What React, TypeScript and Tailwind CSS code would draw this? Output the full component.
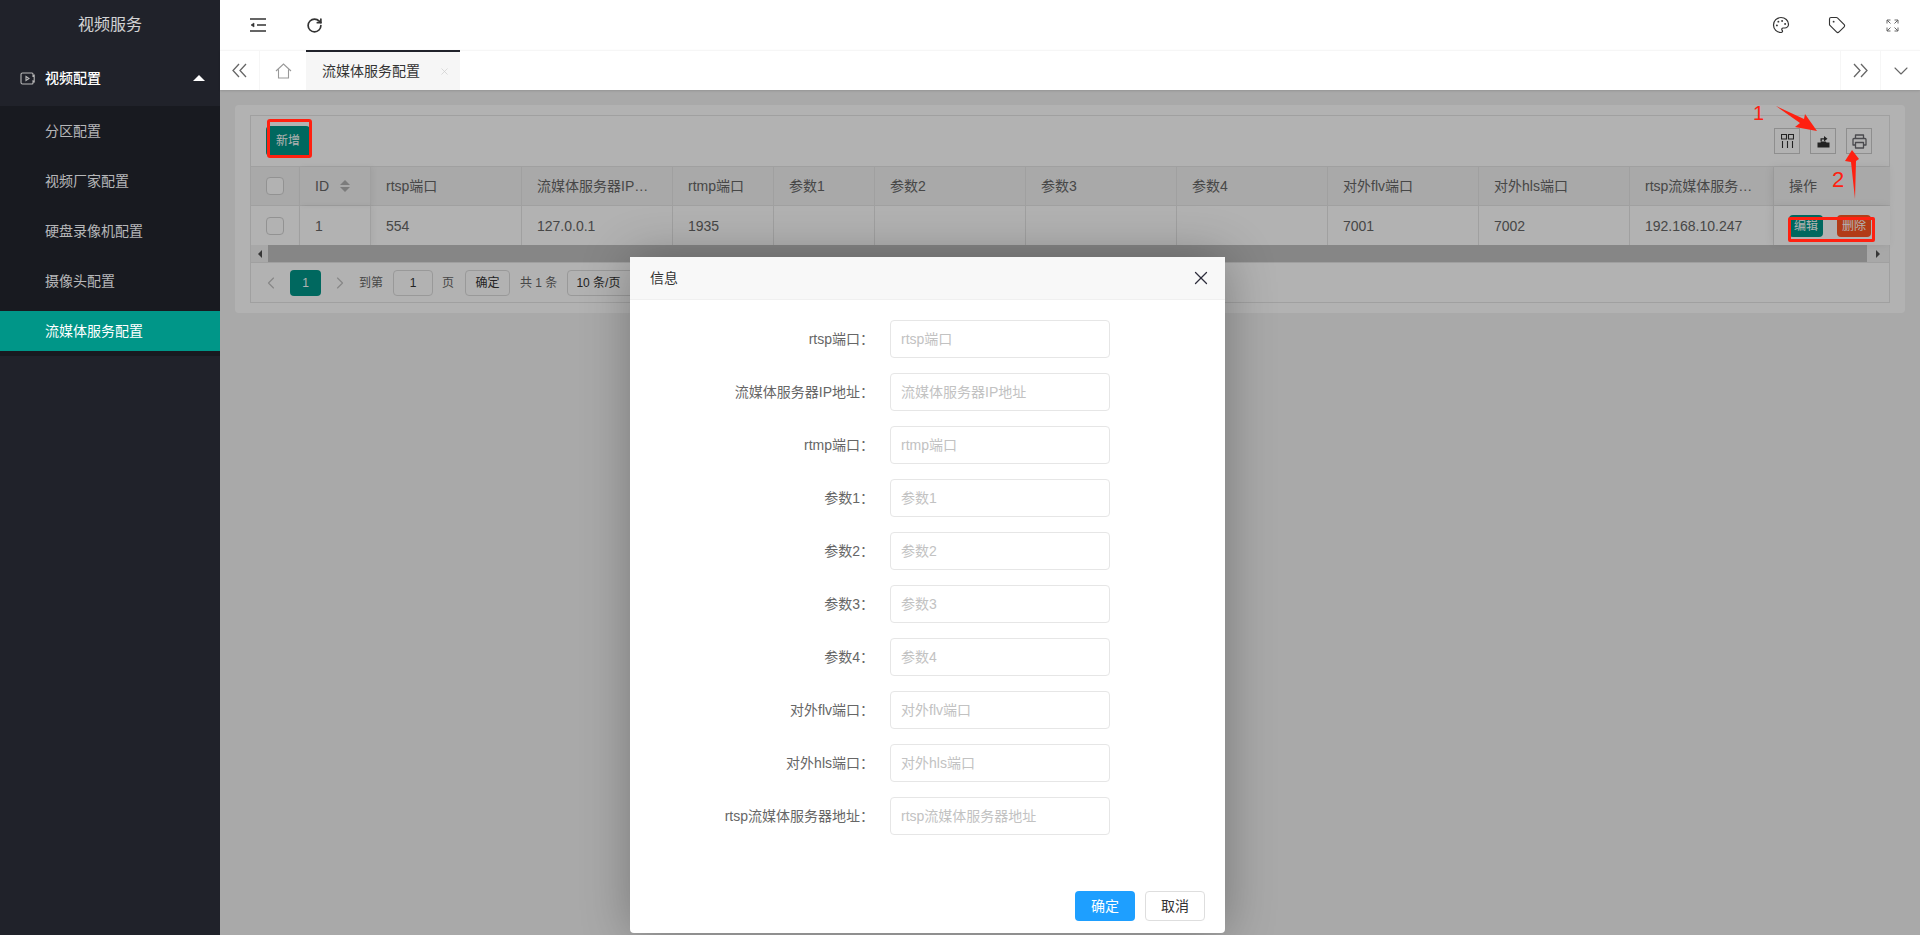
import { ChevronDown, ChevronLeft, ChevronRight, Palette, RotateCw, Tag, X } from "lucide-react";

const gridCols =
  "grid grid-cols-[49px_71px_151px_151px_101px_101px_151px_151px_151px_151px_151px_144px_116px]";

const menuItems = ["分区配置", "视频厂家配置", "硬盘录像机配置", "摄像头配置", "流媒体服务配置"];

const columns = [
  "rtsp端口",
  "流媒体服务器IP地址",
  "rtmp端口",
  "参数1",
  "参数2",
  "参数3",
  "参数4",
  "对外flv端口",
  "对外hls端口",
  "rtsp流媒体服务器地址",
];

const rowValues = ["554", "127.0.0.1", "1935", "", "", "", "", "7001", "7002", "192.168.10.247"];

const fields = [
  "rtsp端口",
  "流媒体服务器IP地址",
  "rtmp端口",
  "参数1",
  "参数2",
  "参数3",
  "参数4",
  "对外flv端口",
  "对外hls端口",
  "rtsp流媒体服务器地址",
];

function Sidebar() {
  return (
    <aside className="flex h-full w-[220px] shrink-0 flex-col bg-[#20222a]">
      <div className="flex h-[50px] items-center justify-center text-base text-white/80">视频服务</div>
      <div className="flex h-[56px] items-center pl-5 pr-[15px] text-sm text-white">
        <svg width="15" height="13" viewBox="0 0 15 13" fill="none" stroke="#b8b8b8" strokeWidth="1.1">
          <path d="M2.5 1h9.5a1 1 0 0 1 1 1v2l1.200-.8v6.600L13 9v2a1 1 0 0 1-1 1H2.500a1.500 1.500 0 0 1-1.500-1.500v-8A1.500 1.500 0 0 1 2.500 1z" />
          <path d="M6 4.500l3 2-3 2z" />
        </svg>
        <span className="ml-[10px] flex-1 font-medium">视频配置</span>
        <span className="h-0 w-0 border-x-[6px] border-b-[6px] border-x-transparent border-b-white" />
      </div>
      <div className="flex flex-col gap-[10px] bg-[#181a20] py-[5px]">
        {menuItems.map((item, i) => (
          <div
            key={item}
            className={`flex h-10 items-center pl-[45px] text-sm ${
              i === 4 ? "bg-[#009688] text-white" : "text-white/70"
            }`}
          >
            {item}
          </div>
        ))}
      </div>
    </aside>
  );
}

function TopBar() {
  return (
    <div className="flex h-[50px] shrink-0 items-center bg-white text-[#333]">
      <div className="flex w-[75px] justify-center pl-[1px]">
        <svg width="16" height="14" viewBox="0 0 16 14" fill="none" stroke="#333" strokeWidth="1.5">
          <path d="M0 1h16M7 7h9M0 13h16" />
          <path d="M4 5v4L1 7z" fill="#333" strokeWidth="0.6" />
        </svg>
      </div>
      <RotateCw size={17} strokeWidth={2.4} className="ml-[11px]" />
      <div className="ml-auto flex items-center pr-[21px] text-[#333]">
        <Palette size={18} strokeWidth={1.6} />
        <Tag size={18} strokeWidth={1.5} className="ml-[38px]" />
        <svg width="13" height="13" viewBox="0 0 13 13" fill="none" stroke="#666" strokeWidth="1" className="ml-10">
          <path d="M1 4.500V1h3.500M1 1l3.500 3.500M8.500 1H12v3.500M12 1L8.500 4.500M1 8.500V12h3.500M1 12l3.500-3.500M12 8.500V12H8.500M12 12L8.500 8.500" />
        </svg>
      </div>
    </div>
  );
}

function TabBar() {
  return (
    <div className="relative z-10 flex h-10 shrink-0 border-t border-[#f6f6f6] bg-white shadow-[0_1px_2px_rgba(0,0,0,0.12)]">
      <div className="flex w-10 items-center justify-center border-r border-[#f6f6f6]">
        <svg width="15" height="15" viewBox="0 0 15 15" fill="none" stroke="#666" strokeWidth="1.3">
          <path d="M7 1L1 7.500 7 14M14 1L8 7.500 14 14" />
        </svg>
      </div>
      <div className="flex w-[46px] items-center justify-center">
        <svg width="17" height="16" viewBox="0 0 17 16" fill="none" stroke="#999" strokeWidth="1.1">
          <path d="M1 8l7.500-7L16 8M3.500 6.500V15h10V6.500" />
        </svg>
      </div>
      <div className="-mt-px flex w-[154px] items-center border-t-2 border-[#20222a] bg-[#f6f6f6] pl-[16px] text-sm text-[#333]">
        <span>流媒体服务配置</span>
        <X size={11} strokeWidth={1.5} className="ml-[19px] text-[#ccc]" />
      </div>
      <div className="ml-auto flex w-10 items-center justify-center border-l border-[#f6f6f6]">
        <svg width="15" height="15" viewBox="0 0 15 15" fill="none" stroke="#666" strokeWidth="1.3">
          <path d="M1 1l6 6.500L1 14M8 1l6 6.500L8 14" />
        </svg>
      </div>
      <div className="flex w-10 items-center justify-center border-l border-[#f6f6f6]">
        <ChevronDown size={24} strokeWidth={1.1} className="text-[#666]" />
      </div>
    </div>
  );
}

function Checkbox() {
  return <span className="block h-[18px] w-[18px] rounded-sm border border-[#d2d2d2] bg-white" />;
}

function ToolIcon({ children }: { children: React.ReactNode }) {
  return (
    <span className="flex h-[26px] w-[26px] items-center justify-center border border-[#ccc] text-[#333]">
      {children}
    </span>
  );
}

function DataTable() {
  return (
    <div className="border border-[#e6e6e6] text-sm text-[#666]">
      <div className="flex h-[51px] items-center justify-between border-b border-[#e6e6e6] pl-[15px] pr-[17px]">
        <button className="h-[30px] w-[44px] rounded-sm bg-[#009688] text-xs text-white">新增</button>
        <div className="flex gap-[10px]">
          <ToolIcon>
            <svg width="13" height="14" viewBox="0 0 13 14" fill="none" stroke="#333" strokeWidth="1.100">
              <path d="M.5.5h5v4.500h-5zM7.500.5h5v4.500h-5zM1.500 7v7M6.500 7v7M11.500 7v7" />
            </svg>
          </ToolIcon>
          <ToolIcon>
            <svg width="13" height="14" viewBox="0 0 13 14">
              <path d="M0.500 8.500h3l.8-1h4.400l.8 1h3V13.500H.5z" fill="#333" />
              <path d="M3.500 7.500V4.200h3.500V2l3.500 2.800-3.500 2.700V5.400H4.800v2.100z" fill="#333" />
            </svg>
          </ToolIcon>
          <ToolIcon>
            <svg width="15" height="15" viewBox="0 0 15 15" fill="none" stroke="#6b6b70" strokeWidth="1.300" strokeLinejoin="round">
              <path d="M3.500 4.500V1h8v3.500M3.500 11H1V5.500a1 1 0 0 1 1-1h11a1 1 0 0 1 1 1V11h-2.500" />
              <path d="M3.500 8.500h8V14h-8z" />
            </svg>
          </ToolIcon>
        </div>
      </div>

      <div className={`${gridCols} h-[39px] border-b border-[#e6e6e6] bg-[#f2f2f2]`}>
        <div className="flex items-center justify-center border-r border-[#e6e6e6]">
          <Checkbox />
        </div>
        <div className="flex items-center border-r border-[#e6e6e6] pl-[15px] shadow-[2px_0_6px_rgba(0,0,0,0.05)]">
          ID
          <span className="ml-[11px] flex flex-col gap-[2px]">
            <span className="h-0 w-0 border-x-[5px] border-b-[5px] border-x-transparent border-b-[#b2b2b2]" />
            <span className="h-0 w-0 border-x-[5px] border-t-[5px] border-x-transparent border-t-[#b2b2b2]" />
          </span>
        </div>
        {columns.map((c) => (
          <div key={c} className="flex items-center border-r border-[#e6e6e6] px-[15px]">
            <span className="truncate">{c}</span>
          </div>
        ))}
        <div className="relative flex items-center bg-[#f2f2f2] pl-[15px] shadow-[-2px_0_8px_rgba(0,0,0,0.08)]">
          操作
        </div>
      </div>

      <div className={`${gridCols} h-[39px]`}>
        <div className="flex items-center justify-center border-r border-[#e6e6e6]">
          <Checkbox />
        </div>
        <div className="flex items-center border-r border-[#e6e6e6] pl-[15px] shadow-[2px_0_6px_rgba(0,0,0,0.05)]">
          1
        </div>
        {rowValues.map((v, i) => (
          <div key={i} className="flex items-center border-r border-[#e6e6e6] px-[15px]">
            {v}
          </div>
        ))}
        <div className="relative flex items-center gap-[14px] bg-white pl-[15px] shadow-[-2px_0_8px_rgba(0,0,0,0.08)]">
          <button className="h-[22px] w-[34px] rounded-sm bg-[#009688] text-xs text-white">编辑</button>
          <button className="h-[22px] w-[34px] rounded-sm bg-[#ff5722] text-xs text-white">删除</button>
        </div>
      </div>

      <div className="flex h-[17px] items-center bg-[#f1f1f1]">
        <span className="flex w-[17px] justify-center">
          <span className="h-0 w-0 border-y-[4px] border-r-[4px] border-y-transparent border-r-[#505050]" />
        </span>
        <span className="h-full flex-1 bg-[#c1c1c1]" />
        <span className="flex w-[22px] justify-center">
          <span className="h-0 w-0 border-y-[4px] border-l-[4px] border-y-transparent border-l-[#505050]" />
        </span>
      </div>

      <div className="flex h-[40px] items-center border-t border-[#e6e6e6] pl-[10px] text-xs">
        <ChevronLeft size={20} strokeWidth={1.4} className="text-[#c2c2c2]" />
        <span className="ml-[9px] flex h-[26px] w-[31px] items-center justify-center rounded-sm bg-[#009688] text-white">
          1
        </span>
        <ChevronRight size={20} strokeWidth={1.4} className="ml-[9px] text-[#c2c2c2]" />
        <span className="ml-[9px]">到第</span>
        <span className="ml-[10px] flex h-[26px] w-[40px] items-center justify-center rounded-sm border border-[#dcdcdc] text-[#333]">
          1
        </span>
        <span className="ml-[9px]">页</span>
        <span className="ml-[11px] flex h-[26px] w-[45px] items-center justify-center rounded-sm border border-[#dcdcdc] text-[#333]">
          确定
        </span>
        <span className="ml-[10px]">共 1 条</span>
        <span className="ml-[10px] flex h-[26px] w-[100px] items-center rounded-sm border border-[#dcdcdc] pl-[8px] text-[#333]">
          10 条/页
        </span>
      </div>
    </div>
  );
}

function InfoDialog() {
  return (
    <div className="absolute left-[410px] top-[167px] flex h-[676px] w-[595px] flex-col rounded-sm bg-white shadow-[1px_1px_50px_rgba(0,0,0,0.3)]">
      <div className="flex h-[43px] shrink-0 items-center justify-between border-b border-[#f0f0f0] bg-[#f8f8f8] pl-5 pr-[13px] text-sm text-[#333]">
        信息
        <X size={22} strokeWidth={1.4} className="text-[#2e2d3c]" />
      </div>
      <div className="flex flex-1 flex-col gap-[15px] pt-5 text-sm">
        {fields.map((f) => (
          <div key={f} className="flex items-center">
            <label className="w-[244px] text-right text-[#666]">{f}：</label>
            <input
              placeholder={f}
              className="ml-4 h-[38px] w-[220px] rounded-sm border border-[#e6e6e6] px-[10px] text-sm outline-none placeholder:text-[#c2c2c2]"
            />
          </div>
        ))}
      </div>
      <div className="flex justify-end gap-[10px] pb-[12px] pr-5 text-sm">
        <button className="h-[30px] w-[60px] rounded-sm bg-[#1e9fff] text-white">确定</button>
        <button className="h-[30px] w-[60px] rounded-sm border border-[#dedede] bg-white text-[#333]">取消</button>
      </div>
    </div>
  );
}

// red marks someone drew on the screenshot
function Annotations() {
  return (
    <>
      <span className="absolute left-[1533px] top-[11px] text-[20px] leading-6 text-[#ff2010]">1</span>
      <span className="absolute left-[1612px] top-[78px] text-[22px] leading-6 text-[#ff2010]">2</span>
      <svg className="absolute left-[1520px] top-0" width="160" height="110" viewBox="0 0 160 110" fill="#ff2010">
        <polygon points="36,16 64,29 65,24 77,41 55,37 60,33" />
        <polygon points="115,109 111,72 105,71 112,60 119,69 116,71" />
      </svg>
      <span className="absolute left-[47px] top-[29px] h-[39px] w-[45px] rounded-[3px] border-[3px] border-[#ff2010]" />
      <span className="absolute left-[1568px] top-[127px] h-[25px] w-[87px] rounded-[2px] border-[3px] border-[#ff2010]" />
    </>
  );
}

export default function App() {
  return (
    <div
      className="flex h-[935px] w-[1920px] overflow-hidden"
      style={{ fontFamily: '"Liberation Sans", "Noto Sans CJK SC", sans-serif' }}
    >
      <Sidebar />
      <div className="flex min-w-0 flex-1 flex-col">
        <TopBar />
        <TabBar />
        <main className="relative flex-1 bg-[#f2f2f2] p-[15px]">
          <div className="rounded-sm bg-white px-[15px] py-[10px]">
            <DataTable />
          </div>
          <div className="absolute inset-0 bg-black/30" />
          <InfoDialog />
          <Annotations />
        </main>
      </div>
    </div>
  );
}
